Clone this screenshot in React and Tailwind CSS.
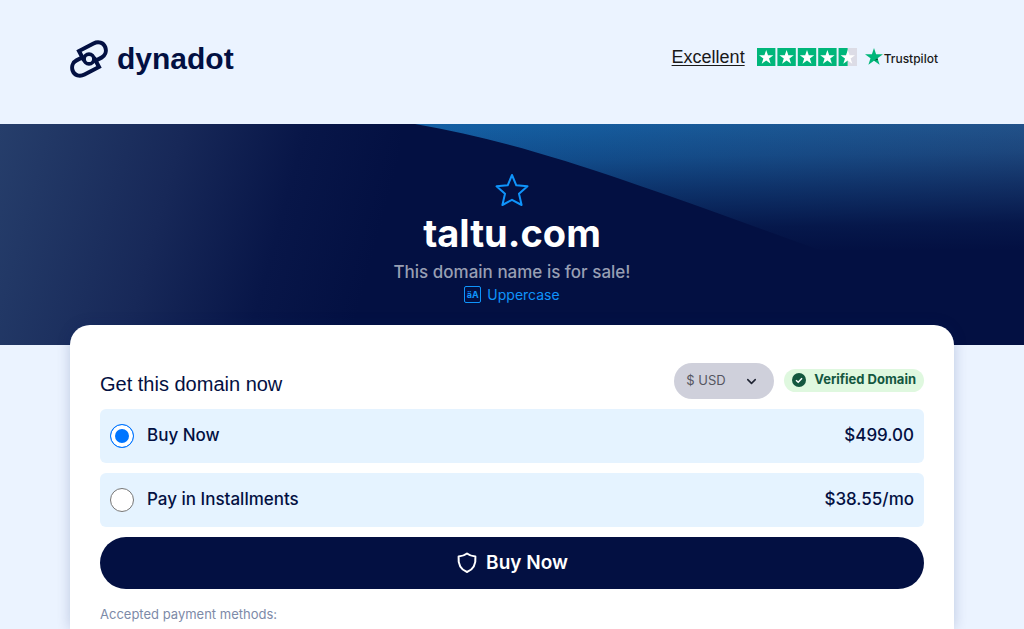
import { useState } from 'react';
import { ChevronDown } from 'lucide-react';

const STAR = 'M10 3l1.8 5.2h5.4l-4.4 3.3 1.7 5.3-4.5-3.2-4.5 3.2 1.7-5.3-4.4-3.3h5.4z';

const OPTIONS = [
  { id: 'buy', label: 'Buy Now', price: '$499.00' },
  { id: 'installments', label: 'Pay in Installments', price: '$38.55/mo' },
];

function Logo() {
  return (
    <a href="#" className="flex items-center gap-[9px] text-[#031042]">
      <svg width="38" height="38" viewBox="0 0 38 38" fill="none" stroke="currentColor" strokeWidth="4">
        <path d="M14 20.5L9 11L23.5 3.4C28.5 0.900 33.500 2.600 35.200 7C36.900 11.500 35 15.800 31.500 17.600L24 21.600" />
        <path d="M24 17.500L29 27L14.500 34.600C9.500 37.100 4.500 35.400 2.800 31C1.100 26.500 3 22.200 6.500 20.400L14 16.400" />
        <circle cx="19" cy="19" r="4.9" strokeWidth="3.600" fill="#ebf3ff" />
      </svg>
      <span className="font-['Liberation_Sans',Arial,sans-serif] text-[30px] leading-[38px] font-bold">dynadot</span>
    </a>
  );
}

function Trustpilot() {
  return (
    <div className="mb-1 flex items-center text-[#191919]">
      <a href="#" className="mr-3 font-['Liberation_Sans',Arial,sans-serif] text-lg leading-6 underline underline-offset-2">
        Excellent
      </a>
      <svg width="100" height="18" viewBox="0 0 100 18" className="mr-2" role="img" aria-label="4.5 out of 5 stars">
        {[0, 1, 2, 3, 4].map((i) => (
          <g key={i} transform={`translate(${i * 20.4} 0)`}>
            <rect width="18.4" height="18" fill={i === 4 ? '#dcdce6' : '#00b67a'} />
            {i === 4 && <rect width="9" height="18" fill="#00b67a" />}
            <path d={STAR} transform="translate(-0.8 -1)" fill="#fff" />
          </g>
        ))}
      </svg>
      <svg width="18" height="17" viewBox="0 0 18 17" className="mb-0.5 mr-px">
        <path d="M9 0l2.1 6.200H18l-5.500 4 2.100 6.500L9 12.700l-5.600 4 2.100-6.500L0 6.200h6.900z" fill="#00b67a" />
        <path d="M13 11.800l-.5-1.600L9 12.700z" fill="#005128" />
      </svg>
      <span className="pt-1 text-[12px] leading-4 font-medium">Trustpilot</span>
    </div>
  );
}

function HeroBackground() {
  return (
    <svg className="absolute inset-0 h-full w-full" viewBox="0 0 1024 221" preserveAspectRatio="none" aria-hidden="true">
      <defs>
        <linearGradient id="left" x1="0" y1="0" x2="1" y2="0.15">
          <stop offset="0" stopColor="#263e6b" />
          <stop offset="0.45" stopColor="#172858" />
          <stop offset="0.75" stopColor="#081648" />
          <stop offset="1" stopColor="#031042" />
        </linearGradient>
        <linearGradient id="wave" x1="0" y1="0" x2="1" y2="0">
          <stop offset="0" stopColor="#1464aa" />
          <stop offset="0.3" stopColor="#1760a2" />
          <stop offset="1" stopColor="#255890" />
        </linearGradient>
        <linearGradient id="fade" gradientUnits="userSpaceOnUse" x1="700" y1="0" x2="702" y2="130">
          <stop offset="0" stopColor="#031042" stopOpacity="0.06" />
          <stop offset="0.25" stopColor="#031042" stopOpacity="0.25" />
          <stop offset="0.5" stopColor="#031042" stopOpacity="0.56" />
          <stop offset="0.8" stopColor="#031042" stopOpacity="0.9" />
          <stop offset="1" stopColor="#031042" />
        </linearGradient>
      </defs>
      <rect width="1024" height="221" fill="#031042" />
      <rect width="400" height="221" fill="url(#left)" />
      <path d="M415 0C540 22 640 62 820 126H1024V0Z" fill="url(#wave)" />
      <rect x="400" width="624" height="221" fill="url(#fade)" />
    </svg>
  );
}

function Hero() {
  return (
    <section className="relative flex h-[221px] flex-col items-center bg-[#031042] pt-12">
      <HeroBackground />
      <div className="relative flex flex-col items-center">
        <svg width="36" height="36" viewBox="0 0 36 36" fill="none" stroke="#0f94fb" strokeWidth="2" strokeLinejoin="round">
          <path d="M18 3l4.3 10.3 11.200 1-8.500 7.400 2.600 11.300L18 27.800 8.400 33 11 21.700 2.500 14.300l11.200-1z" />
        </svg>
        <h1 className="text-[38px] leading-[50px] font-bold text-white">taltu.com</h1>
        <p className="text-[17px] leading-7 font-medium text-[#989fb3]">This domain name is for sale!</p>
        <button type="button" className="flex items-center gap-1.5 text-sm leading-4 text-[#0f94fb]">
          <span className="flex h-[17px] w-[17px] items-center justify-center rounded-xs border border-current text-[9px] leading-none font-bold">
            äA
          </span>
          Uppercase
        </button>
      </div>
    </section>
  );
}

export default function App() {
  const [selected, setSelected] = useState('buy');

  return (
    <div className="flex h-screen flex-col overflow-hidden bg-[#ebf3ff] font-[Inter,sans-serif] text-[#031042]">
      <header className="flex h-[124px] shrink-0 items-center justify-between pr-[86px] pb-[6px] pl-[70px]">
        <Logo />
        <Trustpilot />
      </header>
      <div className="shrink-0">
        <Hero />
      </div>
      <main className="relative mx-[70px] -mt-5 flex-1 rounded-t-[20px] bg-white px-[30px] pt-[38px] shadow-[0_0_14px_rgba(3,32,100,0.2)]">
        <div className="mb-2.5 flex h-9 items-center justify-between">
          <h2 className="pt-1.5 font-['Liberation_Sans',Arial,sans-serif] text-xl">Get this domain now</h2>
          <div className="flex items-center gap-2.5">
            <div className="relative">
              <select
                aria-label="Currency"
                className="h-9 w-[100px] appearance-none rounded-full bg-[#cfd0db] pl-3 text-[13px] text-[#55565f]"
              >
                <option>$ USD</option>
              </select>
              <ChevronDown size={15} strokeWidth={2.5} className="pointer-events-none absolute top-[11px] right-[15px] text-[#202533]" />
            </div>
            <span className="mb-0.5 flex h-[23px] items-center gap-2 rounded-full bg-[#dff8df] px-2 text-[13px] font-bold text-[#14573f]">
              <svg width="14" height="14" viewBox="0 0 14 14">
                <circle cx="7" cy="7" r="7" fill="#14573f" />
                <path d="M4 7.2l2.200 2L10 5.200" fill="none" stroke="#fff" strokeWidth="1.5" />
              </svg>
              Verified Domain
            </span>
          </div>
        </div>
        <div className="flex flex-col gap-2.5">
          {OPTIONS.map((o) => (
            <label key={o.id} className="flex h-[54px] items-center rounded-md bg-[#e5f3ff] px-2.5 text-[17px] font-medium">
              <input
                type="radio"
                name="plan"
                checked={selected === o.id}
                onChange={() => setSelected(o.id)}
                className="mr-[13px] size-6 appearance-none rounded-full border border-[#767676] bg-white checked:border-[#0075ff] checked:bg-[#0075ff] checked:shadow-[inset_0_0_0_4px_white]"
              />
              {o.label}
              <span className="ml-auto">{o.price}</span>
            </label>
          ))}
          <button
            type="button"
            className="flex h-[52px] w-full items-center justify-center gap-2 rounded-full bg-[#031042] text-[19px] font-semibold text-white"
          >
            <svg width="22" height="22" viewBox="0 0 22 22" fill="none" stroke="currentColor" strokeWidth="2" strokeLinejoin="round">
              <path d="M11 1.500C8.800 3.200 6 4.300 2.600 4.600C2 11.500 4 17.300 11 20C18 17.300 20 11.500 19.400 4.600C16 4.300 13.200 3.200 11 1.500Z" />
            </svg>
            Buy Now
          </button>
        </div>
        <p className="mt-[15px] text-[13px] leading-5 text-[#7d8aa8]">Accepted payment methods:</p>
      </main>
    </div>
  );
}
